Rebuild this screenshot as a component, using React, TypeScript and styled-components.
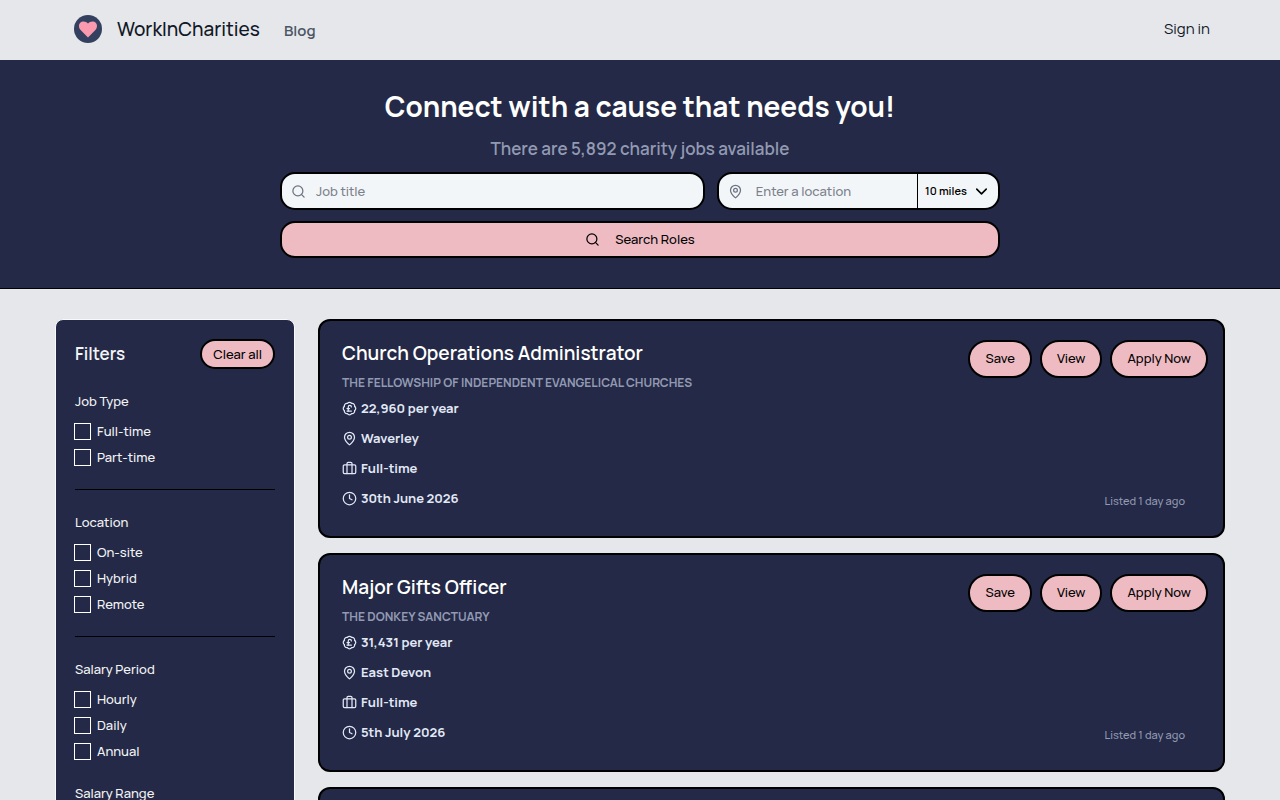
import React from "react";
import styled, { createGlobalStyle } from "styled-components";
import {
  BadgePoundSterling,
  Briefcase,
  ChevronDown,
  Clock,
  MapPin,
  Search,
} from "lucide-react";

const color = {
  page: "#e5e7eb",
  navy: "#232946",
  pink: "#eebbc3",
  field: "#f3f6f8",
  ink: "#111827",
  muted: "#9299b2",
  light: "#e2e8f6",
};

const GlobalStyle = createGlobalStyle`
  *, *::before, *::after { box-sizing: border-box; }
  body {
    margin: 0;
    background: ${color.page};
    color: ${color.ink};
    font-family: Manrope, Inter, "Liberation Sans", sans-serif;
    font-size: 13px;
    font-weight: 500;
    line-height: 20px;
  }
  h1, h2, h3, p, ul, fieldset { margin: 0; padding: 0; }
  button, input, select { font: inherit; color: inherit; }
`;

const Page = styled.div`
  height: 100vh;
  overflow: hidden;
`;

const Header = styled.header`
  display: flex;
  align-items: center;
  height: 60px;
  padding: 0 70px 2px 74px;
`;

const Brand = styled.a`
  display: flex;
  align-items: center;
  gap: 15px;
  color: ${color.ink};
  font-size: 19px;
  text-decoration: none;
`;

const NavLink = styled.a<{ $quiet?: boolean }>`
  margin-left: ${(p) => (p.$quiet ? "24px" : "auto")};
  padding-top: ${(p) => (p.$quiet ? "4px" : "0")};
  color: ${(p) => (p.$quiet ? "#4b5563" : color.ink)};
  font-size: 15px;
  font-weight: ${(p) => (p.$quiet ? 600 : 400)};
  text-decoration: none;
`;

const Hero = styled.section`
  display: flex;
  flex-direction: column;
  align-items: center;
  padding: 28px 20px 30px;
  border-bottom: 1px solid #000;
  background: ${color.navy};
  text-align: center;
`;

const HeroTitle = styled.h1`
  color: #fffffe;
  font-size: 28px;
  font-weight: 700;
  line-height: 36px;
`;

const HeroCount = styled.p`
  margin: 13px 0 11px;
  color: ${color.muted};
  font-size: 17px;
  font-weight: 600;
  line-height: 24px;
`;

const SearchForm = styled.form`
  display: grid;
  grid-template-columns: 3fr 2fr;
  gap: 11px 12px;
  width: 100%;
  max-width: 720px;
`;

const Field = styled.div`
  display: flex;
  align-items: center;
  height: 38px;
  overflow: hidden;
  border: 2px solid #000;
  border-radius: 15px;
  background: ${color.field};
`;

const FieldLabel = styled.label<{ $wide?: boolean }>`
  display: flex;
  padding: 0 ${(p) => (p.$wide ? "13px" : "10px")} 0 9px;
  color: #6b7280;
`;

const TextInput = styled.input`
  flex: 1;
  min-width: 0;
  padding: 0;
  border: 0;
  outline: 0;
  background: transparent;
  &::placeholder { color: #7b818c; opacity: 1; }
`;

const RadiusPicker = styled.div`
  display: grid;
  align-items: center;
  height: 100%;
  width: 81px;
  border-left: 1px solid #000;
  > * { grid-area: 1 / 1; }
  > svg { justify-self: end; margin-right: 7px; pointer-events: none; }
`;

const RadiusSelect = styled.select`
  width: 100%;
  height: 100%;
  padding: 0 0 0 7px;
  border: 0;
  outline: 0;
  appearance: none;
  background: transparent;
  color: #000;
  font-size: 11px;
  font-weight: 600;
`;

const SearchButton = styled.button`
  display: flex;
  grid-column: 1 / -1;
  align-items: center;
  justify-content: center;
  gap: 15px;
  height: 37px;
  padding-bottom: 2px;
  border: 2px solid #000;
  border-radius: 15px;
  background: ${color.pink};
  color: #000;
`;

const Main = styled.main`
  display: grid;
  grid-template-columns: 240px minmax(0, 1fr);
  align-items: start;
  gap: 23px;
  padding: 30px 55px;
`;

const Filters = styled.aside`
  min-height: 800px;
  padding: 19px;
  border: 1px solid #f8fafc;
  border-radius: 8px;
  background: ${color.navy};
  color: #f3f4f6;
`;

const FiltersHead = styled.div`
  display: flex;
  align-items: center;
  justify-content: space-between;
  margin-bottom: 22px;
`;

const FiltersTitle = styled.h2`
  font-size: 17px;
  font-weight: 600;
`;

const Pill = styled.button<{ $small?: boolean }>`
  height: ${(p) => (p.$small ? "30px" : "38px")};
  padding: ${(p) => (p.$small ? "0 11px" : "0 15px 2px")};
  border: 2px solid #000;
  border-radius: 19px;
  background: ${color.pink};
  color: #000;
  white-space: nowrap;
`;

const FilterGroup = styled.fieldset<{ $ruled?: boolean }>`
  min-width: 0;
  margin-bottom: ${(p) => (p.$ruled ? "22px" : "0")};
  padding-bottom: 19px;
  border: 0 solid #000;
  border-bottom-width: ${(p) => (p.$ruled ? "1px" : "0")};
`;

const GroupName = styled.legend`
  margin-bottom: 7px;
  padding: 0;
`;

const Option = styled.label`
  display: flex;
  align-items: center;
  gap: 7px;
  height: 26px;
`;

const Checkbox = styled.input`
  width: 15px;
  height: 15px;
  margin: 0;
  appearance: none;
  outline: 1px solid #fff;
  &:checked { background: ${color.pink}; }
`;

const Jobs = styled.div`
  display: flex;
  flex-direction: column;
  gap: 15px;
`;

const Card = styled.article`
  display: flex;
  justify-content: space-between;
  min-height: 219px;
  padding: 19px 15px 28px 22px;
  border: 2px solid #000;
  border-radius: 12px;
  background: ${color.navy};
`;

const JobTitle = styled.h3`
  color: #fffffe;
  font-size: 19px;
  font-weight: 600;
  line-height: 26px;
`;

const Company = styled.p`
  margin: 7px 0 5px;
  color: ${color.muted};
  font-size: 12px;
  font-weight: 700;
  text-transform: uppercase;
`;

const Facts = styled.ul`
  display: grid;
  gap: 10px;
  list-style: none;
`;

const Fact = styled.li`
  display: flex;
  align-items: center;
  gap: 4px;
  color: ${color.light};
  font-weight: 700;
`;

const CardSide = styled.div`
  display: flex;
  flex-direction: column;
  justify-content: space-between;
`;

const Actions = styled.div`
  display: flex;
  gap: 8px;
`;

const Listed = styled.p`
  padding-right: 23px;
  color: ${color.muted};
  font-size: 11px;
  line-height: 14px;
  text-align: right;
`;

const Logo = () => (
  <svg width="28" height="28" viewBox="0 0 28 28" aria-hidden="true">
    <circle cx="14" cy="14" r="14" fill="#34405f" />
    <path
      d="M14 22.500 6.600 15C3.600 11.800 5 6.800 9 6.600c2.200-.1 3.900.6 5 2 1.100-1.400 2.800-2.100 5-2 4 .2 5.400 5.200 2.400 8.400z"
      fill="#fb9aae"
    />
  </svg>
);

const filterGroups = [
  { name: "Job Type", options: ["Full-time", "Part-time"], ruled: true },
  { name: "Location", options: ["On-site", "Hybrid", "Remote"], ruled: true },
  { name: "Salary Period", options: ["Hourly", "Daily", "Annual"], ruled: false },
  { name: "Salary Range", options: [], ruled: false },
];

const jobs = [
  {
    title: "Church Operations Administrator",
    company: "The Fellowship of Independent Evangelical Churches",
    salary: "22,960 per year",
    place: "Waverley",
    type: "Full-time",
    closes: "30th June 2026",
  },
  {
    title: "Major Gifts Officer",
    company: "The Donkey Sanctuary",
    salary: "31,431 per year",
    place: "East Devon",
    type: "Full-time",
    closes: "5th July 2026",
  },
];

const icon = { size: 15, strokeWidth: 2, "aria-hidden": true };

const JobCard = ({ job }: { job: (typeof jobs)[number] }) => (
  <Card>
    <div>
      <JobTitle>{job.title}</JobTitle>
      <Company>{job.company}</Company>
      <Facts>
        <Fact><BadgePoundSterling {...icon} />{job.salary}</Fact>
        <Fact><MapPin {...icon} />{job.place}</Fact>
        <Fact><Briefcase {...icon} />{job.type}</Fact>
        <Fact><Clock {...icon} />{job.closes}</Fact>
      </Facts>
    </div>
    <CardSide>
      <Actions>
        <Pill type="button">Save</Pill>
        <Pill type="button">View</Pill>
        <Pill type="button">Apply Now</Pill>
      </Actions>
      <Listed>Listed 1 day ago</Listed>
    </CardSide>
  </Card>
);

export default function App() {
  return (
    <Page>
      <GlobalStyle />
      <Header>
        <Brand href="#"><Logo />WorkInCharities</Brand>
        <NavLink href="#" $quiet>Blog</NavLink>
        <NavLink href="#">Sign in</NavLink>
      </Header>
      <Hero>
        <HeroTitle>Connect with a cause that needs you!</HeroTitle>
        <HeroCount>There are 5,892 charity jobs available</HeroCount>
        <SearchForm onSubmit={(e) => e.preventDefault()}>
          <Field>
            <FieldLabel htmlFor="title"><Search {...icon} /></FieldLabel>
            <TextInput id="title" aria-label="Job title" placeholder="Job title" />
          </Field>
          <Field>
            <FieldLabel htmlFor="place" $wide><MapPin {...icon} /></FieldLabel>
            <TextInput id="place" aria-label="Location" placeholder="Enter a location" />
            <RadiusPicker>
              <RadiusSelect aria-label="Radius" defaultValue="10">
                <option value="10">10 miles</option>
              </RadiusSelect>
              <ChevronDown {...icon} size={19} color="#000" />
            </RadiusPicker>
          </Field>
          <SearchButton type="submit"><Search {...icon} />Search Roles</SearchButton>
        </SearchForm>
      </Hero>
      <Main>
        <Filters>
          <FiltersHead>
            <FiltersTitle>Filters</FiltersTitle>
            <Pill type="button" $small>Clear all</Pill>
          </FiltersHead>
          {filterGroups.map((group) => (
            <FilterGroup key={group.name} $ruled={group.ruled}>
              <GroupName>{group.name}</GroupName>
              {group.options.map((option) => (
                <Option key={option}>
                  <Checkbox type="checkbox" />
                  {option}
                </Option>
              ))}
            </FilterGroup>
          ))}
        </Filters>
        <Jobs>
          {jobs.map((job) => <JobCard key={job.title} job={job} />)}
          <Card aria-busy="true" />
        </Jobs>
      </Main>
    </Page>
  );
}
